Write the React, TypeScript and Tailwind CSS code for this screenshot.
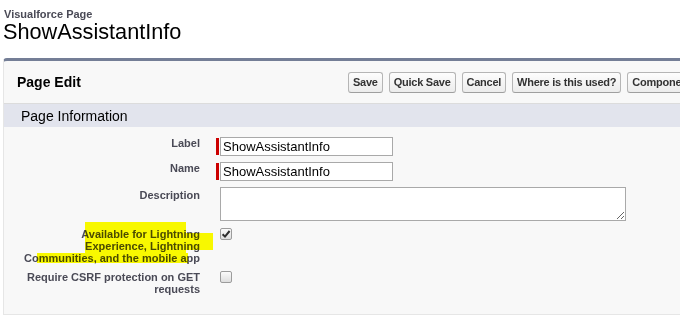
import React from "react";

const labelCls =
  "w-[196px] shrink-0 pl-[18px] text-right text-[11px] leading-[13px] font-bold text-[#4a4a56]";
const wrapLabelCls =
  "w-[196px] shrink-0 pl-[18px] text-right text-[11px] leading-[12px] font-bold text-[#4a4a56]";

function Required() {
  return <div className="w-[3px] h-[17px] bg-[#c00] mr-[1px] shrink-0" />;
}

function Checkbox({ checked }: { checked?: boolean }) {
  return (
    <div className="mt-[1px] w-[12px] h-[12px] rounded-[2px] border border-[#9c9c9c] bg-gradient-to-b from-[#fbfbfb] to-[#dedede] flex items-center justify-center">
      {checked && (
        <svg width="10" height="10" viewBox="0 0 10 10">
          <path d="M1.6 5.2 L4 7.6 L8.6 2" fill="none" stroke="#2e2e2e" strokeWidth="2" />
        </svg>
      )}
    </div>
  );
}

function Btn({ children }: { children: React.ReactNode }) {
  return (
    <button className="shrink-0 h-[21px] px-[4px] rounded-[3px] border border-[#b5b5b5] border-b-[#9f9f9f] bg-gradient-to-b from-[#fdfdfd] to-[#ececec] text-[11px] tracking-[-0.25px] leading-[13px] font-bold text-[#333] whitespace-nowrap">
      {children}
    </button>
  );
}

export default function App() {
  return (
    <div
      className="relative w-[680px] h-[318px] overflow-hidden bg-white"
      style={{ fontFamily: "'Liberation Sans', Arial, sans-serif" }}
    >
      <div className="pl-[3px] pt-[8px]">
        <div className="pl-[1px] text-[11px] leading-[13px] font-bold text-[#4a4a56]">Visualforce Page</div>
        <div className="text-[21.7px] leading-[22px] text-black">ShowAssistantInfo</div>
      </div>

      <div className="ml-[3px] mt-[15px] w-[760px] rounded-tl-[4px] border-t-[3px] border-t-[#747e96] border-l border-l-[#e6e6e6] border-b border-b-[#e6e6e6] bg-[#f8f8f8]">
        <div className="flex items-center h-[42px]">
          <div className="w-[344px] shrink-0 pl-[13px] text-[14px] leading-[17px] font-bold text-black">Page Edit</div>
          <div className="flex gap-[6px]">
            <Btn>Save</Btn>
            <Btn>Quick Save</Btn>
            <Btn>Cancel</Btn>
            <Btn>Where is this used?</Btn>
            <Btn>Component Reference</Btn>
          </div>
        </div>
        <div className="border-t border-t-[#dcdcdc] bg-[#e2e4ed] h-[24px] pl-[17px] text-[14px] leading-[24px] text-black">
          Page Information
        </div>

        <div className="pt-[10px] pb-[19px] flex flex-col gap-[6px]">
          <div className="flex items-start">
            <div className={labelCls}>Label</div>
            <div className="w-[16px] shrink-0" />
            <div className="flex items-center">
              <Required />
              <div className="w-[173px] h-[19px] border border-[#a9a9a9] bg-white pl-[2px] text-[13px] leading-[17px] text-black">
                ShowAssistantInfo
              </div>
            </div>
          </div>
          <div className="flex items-start">
            <div className={labelCls}>Name</div>
            <div className="w-[16px] shrink-0" />
            <div className="flex items-center">
              <Required />
              <div className="w-[173px] h-[19px] border border-[#a9a9a9] bg-white pl-[2px] text-[13px] leading-[17px] text-black">
                ShowAssistantInfo
              </div>
            </div>
          </div>
          <div className="flex items-start">
            <div className={labelCls + " pt-[2px]"}>Description</div>
            <div className="w-[20px] shrink-0" />
            <textarea className="block w-[406px] h-[34px] border border-[#a9a9a9] bg-white outline-none" />
          </div>
          <div className="flex items-start">
            <div className={wrapLabelCls + " pt-[1px]"}>
              Available for Lightning Experience, Lightning Communities, and the mobile app
            </div>
            <div className="w-[20px] shrink-0" />
            <Checkbox checked />
          </div>
          <div className="flex items-start">
            <div className={wrapLabelCls + " pt-[1px]"}>Require CSRF protection on GET requests</div>
            <div className="w-[20px] shrink-0" />
            <Checkbox />
          </div>
        </div>
      </div>

      <div className="absolute left-[85px] top-[222px] w-[101px] h-[31px] bg-[#ffff00] mix-blend-multiply" />
      <div className="absolute left-[186px] top-[233px] w-[27px] h-[17px] bg-[#ffff00] mix-blend-multiply" />
      <div className="absolute left-[37px] top-[253px] w-[151px] h-[10px] bg-[#ffff00] mix-blend-multiply" />
    </div>
  );
}
